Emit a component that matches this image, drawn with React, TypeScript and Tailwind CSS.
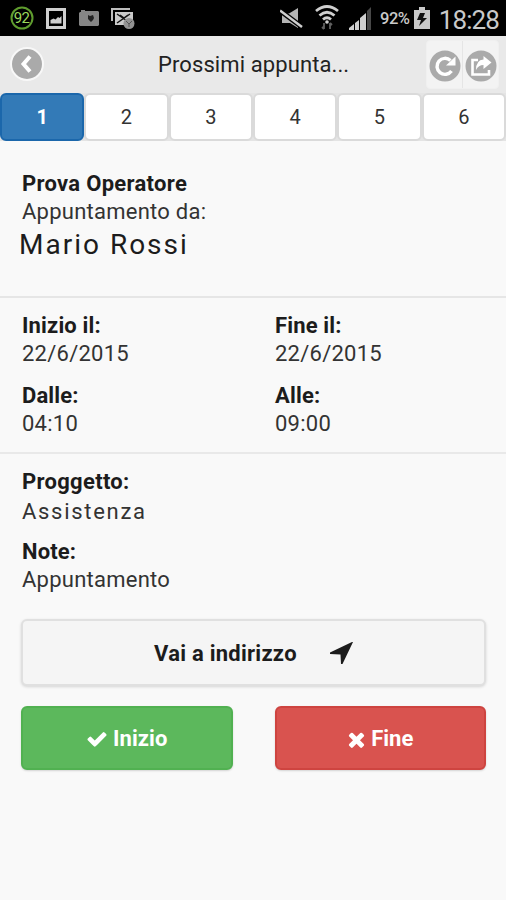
import React from "react";

const pages = [1, 2, 3, 4, 5, 6];

function Gauge() {
  return (
    <svg className="h-6 w-6" viewBox="0 0 24 24" fill="none">
      <circle cx="12" cy="12" r="10.500" stroke="#5f9c2e" strokeWidth="2" />
      <text x="11.500" y="17.300" textAnchor="middle" fontFamily="Roboto, sans-serif" fontSize="15" letterSpacing="-0.8" fill="#9bd85c">
        92
      </text>
    </svg>
  );
}

function StatusBar() {
  return (
    <div className="flex h-9 shrink-0 items-center bg-black pl-[10px] pr-[7px] text-[#c9c9c9]">
      <Gauge />
      <svg className="ml-3 h-[21px] w-5" viewBox="0 0 20 21">
        <path fill="#cfcfcf" fillRule="evenodd" d="M0 0h20v21H0zM3 3v15h14V3z" />
        <path fill="#cfcfcf" d="M4.500 15.500V12l3-1.500 2 1L12 9l1.500 1L15.500 8v7.500z" />
      </svg>
      <svg className="ml-[13px] h-4 w-5" viewBox="0 0 20 16">
        <path fill="#858585" d="M1 2h1V0h4v1h13l1 1v13l-1 1H1l-1-1V3z" />
        <path fill="#222" d="M9 5l2 1 3-1 1 3-1 2-2 2-3-3z" />
      </svg>
      <svg className="ml-3 h-[23px] w-6" viewBox="0 0 24 23" fill="none">
        <path d="M1 14V2h18" stroke="#bdbdbd" strokeWidth="2" />
        <path d="M4 5h18v13H4z" fill="#c9c9c9" />
        <path d="M6 7l13 9M19 7L6 16M9 8l4 3 4-3" stroke="#111" strokeWidth="1.500" />
        <circle cx="18" cy="16.500" r="5.500" fill="#929292" />
        <path d="M15 14l3 3 3-3M18 17v3" stroke="#555" />
      </svg>
      <div className="flex-1" />
      <svg className="h-[21px] w-6" viewBox="0 0 24 21" fill="none">
        <path d="M2 5.500h7L18 0v20l-8-5H2z" fill="#b4b4b4" />
        <path d="M0 2.500l22 16.500" stroke="#000" strokeWidth="5" />
        <path d="M0 2.500l22 16.500" stroke="#cfcfcf" strokeWidth="2.500" />
      </svg>
      <svg className="ml-[11px] h-[26px] w-6" viewBox="0 0 24 26" fill="none">
        <path d="M1 6q11-9 22 0M4.500 10.500q7.500-6.500 15 0M8 14.500q4-3.500 8 0" stroke="#cfcfcf" strokeWidth="2.800" />
        <circle cx="12" cy="17" r="1.800" fill="#cfcfcf" />
        <path d="M9 18v6M7 22l2 2M15 24v-6M17 20l-2-2" stroke="#606060" strokeWidth="1.800" />
      </svg>
      <svg className="ml-[9px] h-[23px] w-[24px]" viewBox="0 0 24 23">
        <path fill="#cfcfcf" d="M1 23v-2l5-4v6zM7 23v-7l4-3v10zM12 23V11l6-5v17z" />
        <path fill="#484848" d="M19 23V4l4-4v23z" />
      </svg>
      <span className="ml-[8px] w-[32px] whitespace-nowrap pt-[2px] text-[16.500px] font-medium tracking-[-0.5px]">92%</span>
      <svg className="ml-[2px] h-[22px] w-4" viewBox="0 0 16 22">
        <path fill="#c8c8c8" d="M5 0h6v3h5v19H0V3h5z" />
        <path fill="#111" d="M6 6h5l-2 5h4l-8 8 2-6H3z" />
      </svg>
      <span className="ml-[8px] w-[61px] whitespace-nowrap pt-[3px] text-right text-[26px] tracking-[-0.9px] leading-9">18:28</span>
    </div>
  );
}

function Header() {
  return (
    <header className="flex h-[57px] shrink-0 items-center bg-[#e9e9e9] pl-[10px] pr-[7px]">
      <div className="-mt-px flex h-[34px] w-[34px] items-center justify-center rounded-full border-2 border-[#f8f8f8] bg-[#aaa]">
        <svg className="h-5 w-4" viewBox="0 0 16 20" fill="none">
          <path d="M11 2.500L4.500 10l6.500 7.500" stroke="#fff" strokeWidth="4" />
        </svg>
      </div>
      <h1 className="ml-[114px] flex-1 whitespace-nowrap pt-px text-[22px] tracking-[0.1px] text-[#222]">Prossimi appunta...</h1>
      <div className="flex h-[49px] w-[73px] rounded-sm border border-[#f0f0f0] bg-[#f3f3f3]">
        <div className="flex flex-1 items-center justify-center border-r border-[#e5e5e5]">
          <svg className="mt-[2px] h-8 w-8" viewBox="0 0 32 32" fill="none">
            <circle cx="16" cy="16" r="15.500" fill="#aaa" />
            <path d="M22.500 21a8 8 0 1 1-1-10.500" stroke="#fff" strokeWidth="3.400" />
            <path d="M26.500 6.500v9H17z" fill="#fff" />
          </svg>
        </div>
        <div className="flex flex-1 items-center justify-center">
          <svg className="mt-[2px] h-8 w-8" viewBox="0 0 32 32" fill="none">
            <circle cx="16" cy="16" r="15.500" fill="#aaa" />
            <path d="M13 10H7.500v14.500H24V20" stroke="#fff" strokeWidth="2.600" />
            <path d="M18.500 6l8 6.500-8 6.500v-4q-5 0-7.500 5 0-10 7.500-10.500z" fill="#fff" />
          </svg>
        </div>
      </div>
    </header>
  );
}

function Pager() {
  return (
    <nav className="grid h-12 shrink-0 grid-cols-6 bg-[#e4e4e4]">
      {pages.map((n) => (
        <button
          key={n}
          className={
            n === 1
              ? "rounded-[6px] border-2 border-[#1b67ab] bg-[#337ab7] pb-px text-[20px] font-bold text-white"
              : "rounded-[6px] border-2 border-[#dadada] bg-white pb-px text-[20px] text-[#333]"
          }
        >
          {n}
        </button>
      ))}
    </nav>
  );
}

function Field({ label, value }: { label: string; value: string }) {
  return (
    <div>
      <div className="font-bold tracking-[0.15px] text-[#1c1c1c]">{label}</div>
      <div className="tracking-[0.25px]">{value}</div>
    </div>
  );
}

export default function App() {
  return (
    <div className="flex h-[900px] w-[506px] flex-col overflow-hidden bg-[#f9f9f9] font-[Roboto,sans-serif] text-[22px] leading-7 text-[#333]">
      <StatusBar />
      <Header />
      <Pager />
      <section className="h-[156.500px] shrink-0 border-b-2 border-[#e6e6e6] px-[22px] pt-[28.500px]">
        <div className="font-bold tracking-[0.3px] text-[#1c1c1c]">Prova Operatore</div>
        <div className="tracking-[0.25px]">Appuntamento da:</div>
        <div className="-ml-[3px] pt-[3.500px] text-[28px] leading-8 tracking-[2px] text-[#1c1c1c]">Mario Rossi</div>
      </section>
      <section className="grid h-[156.500px] shrink-0 grid-cols-2 content-start gap-y-[14px] border-b-2 border-[#e9e9e9] pl-[22px] pt-[14px]">
        <Field label="Inizio il:" value="22/6/2015" />
        <div className="pl-[11px]"><Field label="Fine il:" value="22/6/2015" /></div>
        <Field label="Dalle:" value="04:10" />
        <div className="pl-[11px]"><Field label="Alle:" value="09:00" /></div>
      </section>
      <section className="px-[22px] pt-[14px]">
        <div className="font-bold tracking-[0.3px] text-[#1c1c1c]">Proggetto:</div>
        <div className="pt-[2px] tracking-[1.7px]">Assistenza</div>
        <div className="mt-[12px]"><Field label="Note:" value="Appuntamento" /></div>
      </section>
      <div className="pl-[21px] pr-[20px] pt-[25px]">
        <button className="flex h-[67px] w-full items-center rounded-[6px] border-2 border-[#e0e0e0] bg-[#f5f5f5] pl-[131px] font-bold text-[#1c1c1c] shadow-[0_1px_3px_rgba(0,0,0,0.15)]">
          <span className="w-[143px] whitespace-nowrap pt-[2px] text-left tracking-[0.25px]">Vai a indirizzo</span>
          <svg className="ml-[33px] h-[22px] w-[23px]" viewBox="0 0 23 22">
            <path fill="#1c1c1c" d="M22 0h1L12.500 22H11l-.5-9.500L0 12v-1.500z" />
          </svg>
        </button>
        <div className="mt-5 grid grid-cols-2 gap-[42px] text-white">
          <button className="flex h-[64px] items-center justify-center rounded-[6px] border-2 border-[#51b151] bg-[#5cb85c] pt-[2px] font-bold tracking-[0.1px] shadow-[0_1px_2px_rgba(0,0,0,0.15)]">
            <svg className="mr-[5px] h-[22px] w-[22px]" viewBox="0 0 1792 1792" fill="#fff">
              <path d="M1671 566q0 40-28 68l-724 724-136 136q-28 28-68 28t-68-28l-136-136-362-362q-28-28-28-68t28-68l136-136q28-28 68-28t68 28l294 295 656-657q28-28 68-28t68 28l136 136q28 28 28 68z" />
            </svg>
            Inizio
          </button>
          <button className="flex h-[64px] items-center justify-center rounded-[6px] border-2 border-[#ce4440] bg-[#d9534f] pr-[2px] pt-[2px] font-bold shadow-[0_1px_2px_rgba(0,0,0,0.15)]">
            <svg className="mr-[3px] h-[23px] w-[23px]" viewBox="0 0 1792 1792" fill="#fff">
              <path d="M1490 1322q0 40-28 68l-136 136q-28 28-68 28t-68-28l-294-294-294 294q-28 28-68 28t-68-28l-136-136q-28-28-28-68t28-68l294-294-294-294q-28-28-28-68t28-68l136-136q28-28 68-28t68 28l294 294 294-294q28-28 68-28t68 28l136 136q28 28 28 68t-28 68l-294 294 294 294q28 28 28 68z" />
            </svg>
            Fine
          </button>
        </div>
      </div>
    </div>
  );
}
